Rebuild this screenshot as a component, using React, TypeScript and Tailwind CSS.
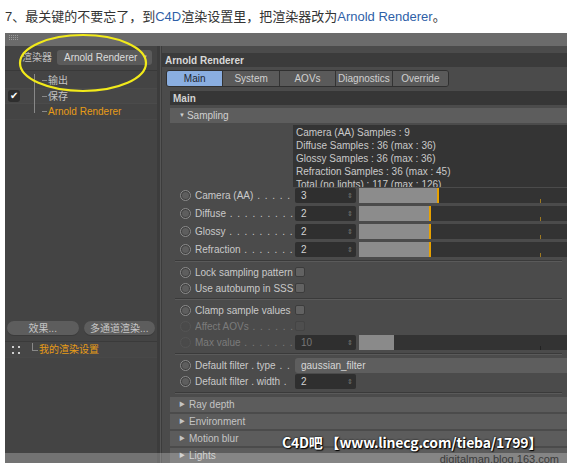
const ui = { fontFamily: '"Liberation Sans", "Noto Sans CJK SC", Arial, sans-serif' };
const cjk = { fontFamily: '"Liberation Sans", "Noto Sans CJK SC", sans-serif' };

function Radio({ dim }: { dim?: boolean }) {
  return (
    <span
      className={
        "mr-[4px] flex h-[11px] w-[11px] shrink-0 items-center justify-center rounded-full border " +
        (dim ? "border-[#555] bg-[#4a4a4a]" : "border-[#8d8d8d] bg-[#3e3e3e]")
      }
    >
      <span className={"h-[7px] w-[7px] rounded-full " + (dim ? "bg-[#4a4a4a]" : "bg-[#5e5e5e]")} />
    </span>
  );
}

// label followed by leader dots, cut to the column width
function Label({ text, dots, dim }: { text: string; dots?: string; dim?: boolean }) {
  return (
    <span
      className={
        "w-[100px] shrink-0 overflow-hidden whitespace-nowrap text-[10px] " + (dim ? "text-[#7b7b7b]" : "text-[#c9c9c9]")
      }
    >
      {text}
      {dots && <span className="tracking-[1px]"> {dots}</span>}
    </span>
  );
}

function NumField({ value, dim }: { value: string; dim?: boolean }) {
  return (
    <div
      className={
        "flex h-[15px] w-[61px] shrink-0 items-center justify-between rounded-[2px] bg-[#2f2f2f] pl-[6px] pr-[3px] text-[10px] " +
        (dim ? "text-[#777]" : "text-[#d4d4d4]")
      }
    >
      <span>{value}</span>
      <span className="text-[7px] leading-none text-[#777]">⇕</span>
    </div>
  );
}

function Slider({ fill, dim }: { fill: string; dim?: boolean }) {
  return (
    <div className="relative ml-[3px] flex h-[15px] flex-1 bg-[#333]">
      <div className={fill + " h-full " + (dim ? "bg-[#8a8a8a]" : "border-r-2 border-[#e7a100] bg-[#8c8c8c]")} />
      <span className={"absolute bottom-0 left-[181px] h-[4px] w-[1px] " + (dim ? "bg-[#222]" : "bg-[#a07a20]")} />
    </div>
  );
}

function ParamRow({ label, dots, value, fill }: { label: string; dots: string; value: string; fill: string }) {
  return (
    <div className="flex h-[18px] items-center pl-[10px]">
      <Radio />
      <Label text={label} dots={dots} />
      <NumField value={value} />
      <Slider fill={fill} />
    </div>
  );
}

function CheckRow({ label, dots, dim }: { label: string; dots?: string; dim?: boolean }) {
  return (
    <div className="flex h-[16px] items-center pl-[10px]">
      <Radio dim={dim} />
      <Label text={label} dots={dots} dim={dim} />
      <span
        className={
          "h-[10px] w-[10px] rounded-[2px] border " + (dim ? "border-[#444] bg-[#4e4e4e]" : "border-[#3c3c3c] bg-[#626262]")
        }
      />
    </div>
  );
}

function Sep() {
  return <div className="mx-[5px] my-[2px] h-[2px] border-t border-b border-t-[#3a3a3a] border-b-[#5a5a5a]" />;
}

function Section({ title }: { title: string }) {
  return (
    <div className="flex h-[15px] items-center bg-[#5c5c5c] pl-[9px] text-[10px] text-[#c4c4c4]">
      <span className="mr-[4px] text-[6px]">▶</span>
      {title}
    </div>
  );
}

const tabs = ["Main", "System", "AOVs", "Diagnostics", "Override"];

export default function App() {
  return (
    <div className="relative h-[463px] w-[567px] overflow-hidden bg-white" style={ui}>
      <div className="flex h-[33px] items-center pl-[5px] text-[13px] text-[#333]" style={cjk}>
        7、最关键的不要忘了，到<span className="text-[#2f5fa7]">C4D</span>渲染设置里，把渲染器改为
        <span className="text-[#2f5fa7]">Arnold Renderer</span>。
      </div>

      <div className="ml-[5px] flex h-[430px] flex-col">
        {/* title strip */}
        <div className="flex h-[13px] items-start bg-[#6b6b6b] pl-[4px] pt-[2px]">
          <div className="grid grid-cols-5 gap-[1px]">
            {Array.from({ length: 15 }).map((_, i) => (
              <span key={i} className="h-[1px] w-[1px] bg-[#9a9a9a]" />
            ))}
          </div>
        </div>

        <div className="flex flex-1">
          {/* left panel */}
          <div className="flex w-[152px] flex-col bg-[#444]">
            <div className="mt-[4px] flex h-[15px] items-center">
              <span className="ml-[17px] w-[35px] text-[10px] text-[#bdbdbd]" style={cjk}>
                渲染器
              </span>
              <div className="flex h-[15px] w-[95px] items-center justify-between rounded-[3px] bg-[#5b5b5b] pl-[7px] pr-[4px] text-[10px] text-[#dcdcdc]">
                Arnold Renderer
                <span className="text-[6px] text-[#bbb]">▼</span>
              </div>
            </div>
            <div className="mt-[5px] h-[1px] bg-[#393939]" />
            <div className="relative mt-[2px] text-[10px]" style={cjk}>
              <div className="flex h-[16px] items-center border-b border-[#4a4a4a] pl-[37px] text-[#c4c4c4]">
                <span className="mr-[1px] h-[1px] w-[5px] bg-[#888]" />
                输出
              </div>
              <div className="flex h-[15px] items-center border-b border-[#4b4b4b] bg-[#474747] pl-[37px] text-[#c4c4c4]">
                <span className="mr-[1px] h-[1px] w-[5px] bg-[#888]" />
                保存
              </div>
              <div className="flex h-[16px] items-center border-b border-[#484848] pl-[37px] text-[#e89c16]">
                <span className="mr-[1px] h-[1px] w-[5px] bg-[#888]" />
                Arnold Renderer
              </div>
              <span className="absolute left-[29px] top-[1px] h-[39px] w-[1px] bg-[#888]" />
              <span className="absolute left-[3px] top-[17px] flex h-[12px] w-[12px] items-center justify-center rounded-[3px] bg-[#2e2e2e] text-[10px] leading-none text-white">
                ✔
              </span>
            </div>

            <div className="mt-[201px] flex gap-[5px] px-[2px]" style={cjk}>
              <div className="flex h-[14px] flex-1 items-center justify-center rounded-full bg-[#5d5d5d] text-[10px] text-[#c6c6c6] shadow-[0_1px_0_#3a3a3a]">
                效果...
              </div>
              <div className="flex h-[14px] flex-1 items-center justify-center rounded-full bg-[#5d5d5d] text-[10px] text-[#c6c6c6] shadow-[0_1px_0_#3a3a3a]">
                多通道渲染...
              </div>
            </div>
            <div className="mt-[6px] h-[1px] bg-[#3a3a3a]" />
            <div className="flex h-[16px] items-center border-b border-[#484848] bg-[#464646] text-[10px] text-[#e89c16]" style={cjk}>
              <span className="ml-[7px] grid grid-cols-3 gap-[1px]">
                {[1, 0, 1, 0, 0, 0, 1, 0, 1].map((v, i) => (
                  <span key={i} className={"h-[2px] w-[2px] " + (v ? "bg-[#cfcfcf]" : "bg-transparent")} />
                ))}
              </span>
              <span className="ml-[12px] mr-[1px] h-[8px] w-[6px] -translate-y-[3px] border-b border-l border-[#888]" />
              我的渲染设置
            </div>
          </div>

          {/* divider */}
          <div className="flex w-[5px] bg-[#3c3c3c]">
            <div className="ml-[3px] w-[1px] bg-[#555]" />
          </div>

          {/* right panel */}
          <div className="flex flex-1 flex-col bg-[#4b4b4b]">
            <div className="mt-[7px] flex h-[14px] items-center bg-[#3b3b3b] pl-[3px] text-[10px] font-bold text-[#d8d8d8]">
              Arnold Renderer
            </div>
            <div className="ml-[4px] mt-[3px] flex h-[17px] w-[283px] overflow-hidden rounded-[3px] border border-[#303030]">
              {tabs.map((t, i) => (
                <div
                  key={t}
                  className={
                    "flex flex-1 items-center justify-center border-r border-[#333] text-[10px] last:border-r-0 " +
                    (i === 0 ? "bg-[#8aaee0] text-[#1f2630]" : "bg-[#5a5a5a] text-[#d0d0d0]")
                  }
                >
                  {t}
                </div>
              ))}
            </div>

            <div className="ml-[8px] mt-[4px] flex flex-col">
              <div className="flex h-[14px] items-center bg-[#363636] pl-[3px] text-[10px] font-bold text-[#d2d2d2]">
                Main
              </div>
              <div className="mt-[3px] flex h-[15px] items-center bg-[#5d5d5d] pl-[9px] text-[10px] text-[#d0d0d0]">
                <span className="mr-[2px] text-[6px]">▼</span>
                Sampling
              </div>
              <div className="ml-[123px] mt-[2px] h-[62px] overflow-hidden bg-[#343434] pl-[3px] pt-[1px] text-[10px] leading-[13px] text-[#c9c9c9]">
                <div>Camera (AA) Samples : 9</div>
                <div>Diffuse Samples : 36 (max : 36)</div>
                <div>Glossy Samples : 36 (max : 36)</div>
                <div>Refraction Samples : 36 (max : 45)</div>
                <div className="h-[10px] overflow-hidden">Total (no lights) : 117 (max : 126)</div>
              </div>

              <div className="mt-[-1px]">
                <ParamRow label="Camera (AA)" dots=". . . . ." value="3" fill="w-[80px]" />
                <ParamRow label="Diffuse" dots=". . . . . . . . ." value="2" fill="w-[72px]" />
                <ParamRow label="Glossy" dots=". . . . . . . . ." value="2" fill="w-[72px]" />
                <ParamRow label="Refraction" dots=". . . . . . ." value="2" fill="w-[72px]" />
              </div>
              <Sep />
              <CheckRow label="Lock sampling pattern" />
              <CheckRow label="Use autobump in SSS" />
              <Sep />
              <CheckRow label="Clamp sample values" />
              <CheckRow label="Affect AOVs" dots=". . . . . ." dim />
              <div className="flex h-[17px] items-center pl-[10px]">
                <Radio dim />
                <Label text="Max value" dots=". . . . . . ." dim />
                <NumField value="10" dim />
                <Slider fill="w-[35px]" dim />
              </div>
              <Sep />
              <div className="flex h-[16px] items-center pl-[10px]">
                <Radio />
                <Label text="Default filter . type" dots=". ." />
                <div className="flex h-[15px] flex-1 items-center rounded-l-[3px] bg-[#5e5e5e] pl-[6px] text-[10px] text-[#d6d6d6]">
                  gaussian_filter
                </div>
              </div>
              <div className="flex h-[17px] items-center pl-[10px]">
                <Radio />
                <Label text="Default filter . width" dots="." />
                <NumField value="2" />
              </div>
              <Sep />
              <div className="mt-[1px] flex flex-col gap-[2px]">
                <Section title="Ray depth" />
                <Section title="Environment" />
                <Section title="Motion blur" />
                <Section title="Lights" />
              </div>
            </div>
          </div>
        </div>
      </div>

      {/* yellow ellipse annotation */}
      <svg className="pointer-events-none absolute left-[18px] top-[33px]" width="132" height="62" viewBox="0 0 132 62">
        <ellipse cx="65" cy="30" rx="63" ry="28" fill="none" stroke="#f2ea1a" strokeWidth="2.2" />
      </svg>

      {/* watermarks */}
      <div
        className="absolute left-[282px] top-[432px] whitespace-nowrap text-[14px] font-bold tracking-[-0.2px] text-white [text-shadow:0_0_2px_#000,1px_1px_1px_#000]"
        style={{ fontFamily: '"Noto Sans CJK SC", "Noto Sans", sans-serif' }}
      >
        C4D吧 【www.linecg.com/tieba/1799】
      </div>
      <div className="absolute bottom-0 left-0 flex h-[10px] w-full justify-end bg-[#ffffff]/25">
        <span className="mr-[8px] mt-[-1px] text-[11px] leading-[14px] text-[#3a3a3a]">digitalman.blog.163.com</span>
      </div>
    </div>
  );
}
